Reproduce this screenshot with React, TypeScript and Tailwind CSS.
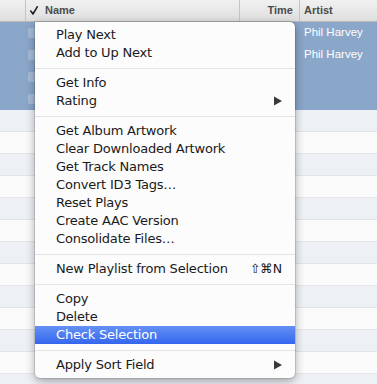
const menuGroups = [
  [{ label: "Play Next" }, { label: "Add to Up Next" }],
  [{ label: "Get Info" }, { label: "Rating", submenu: true }],
  [
    { label: "Get Album Artwork" },
    { label: "Clear Downloaded Artwork" },
    { label: "Get Track Names" },
    { label: "Convert ID3 Tags…" },
    { label: "Reset Plays" },
    { label: "Create AAC Version" },
    { label: "Consolidate Files…" },
  ],
  [{ label: "New Playlist from Selection", shortcut: "⇧⌘N" }],
  [{ label: "Copy" }, { label: "Delete" }, { label: "Check Selection", active: true }],
  [{ label: "Apply Sort Field", submenu: true }],
];

type Item = { label: string; submenu?: boolean; shortcut?: string; active?: boolean };

const rows = Array.from({ length: 17 }, (_, i) => ({
  selected: i < 4,
  artist: i < 2 ? "Phil Harvey" : "",
}));

const Arrow = ({ white }: { white?: boolean }) => (
  <svg width="8" height="10" viewBox="0 0 8 10">
    <path d="M0 0.5 L8 5 L0 9.5 Z" fill={white ? "#fff" : "#3a3a3a"} />
  </svg>
);

const MenuRow = ({ item }: { item: Item }) => (
  <div
    className={`h-[18px] flex items-center justify-between pl-[21px] pr-[13px] ${
      item.active ? "bg-gradient-to-b from-[#6590f4] to-[#3466ee] text-white" : "text-[#1a1a1a]"
    }`}
  >
    <span className="tracking-[-0.2px]">{item.label}</span>
    {item.submenu && <Arrow white={item.active} />}
    {item.shortcut && <span className="text-[12.5px]">{item.shortcut}</span>}
  </div>
);

export default function App() {
  return (
    <div className="relative w-[377px] h-[384px] overflow-hidden bg-white font-['Liberation_Sans',sans-serif]">
      {/* Header */}
      <div className="h-[22px] flex items-stretch bg-gradient-to-b from-[#f1f1f1] to-[#dedede] border-b border-[#b9b9b9] text-[11px] font-bold text-[#4c4c4c]">
        <div className="w-[26px] shrink-0 border-r border-[#c4c4c4]" />
        <div className="w-[14px] shrink-0 flex items-center pl-[4px]">
          {/* check column */}
          <svg width="8" height="9" viewBox="0 0 8 9">
            <path d="M0.8 5 L3 8 L7.2 0.8" fill="none" stroke="#222" strokeWidth="1.6" strokeLinecap="round" strokeLinejoin="round" />
          </svg>
        </div>
        <div className="w-[200px] shrink-0 flex items-center pl-[5px] border-r border-[#c4c4c4]">Name</div>
        <div className="w-[60px] shrink-0 flex items-center justify-end pr-[6px] border-r border-[#c4c4c4]">Time</div>
        <div className="flex-1 flex items-center pl-[4px]">Artist</div>
      </div>

      {/* Rows */}
      {rows.map((row, i) => (
        <div
          key={i}
          className={`h-[22px] flex items-center border-b ${
            row.selected
              ? "bg-[#8aa6c9] border-[#8aa6c9]"
              : i % 2 === 0
              ? "bg-[#edf1f5] border-[#e1e4e8]"
              : "bg-[#fafafa] border-[#e6e6e6]"
          }`}
        >
          <div className="w-[28px] shrink-0" />
          {row.selected && <div className="w-[8px] h-[10px] rounded-[2px] bg-white/25" />}
          <div className="ml-auto w-[73px] text-[11.5px] text-white">{row.artist}</div>
        </div>
      ))}

      {/* Context menu */}
      <div className="absolute left-[35px] top-[22px] w-[260px] py-[4px] bg-[#fcfcfc] rounded-b-[5px] rounded-tr-[5px] shadow-[0_3px_10px_rgba(0,0,0,0.35)] ring-1 ring-black/10 text-[13px] font-['DejaVu_Sans',sans-serif]">
        {menuGroups.map((group, g) => (
          <div key={g}>
            {g > 0 && (
              <div className="h-[12px] flex items-center">
                <div className="w-full h-px bg-[#e3e3e3]" />
              </div>
            )}
            {group.map((item) => (
              <MenuRow key={item.label} item={item} />
            ))}
          </div>
        ))}
      </div>
    </div>
  );
}
